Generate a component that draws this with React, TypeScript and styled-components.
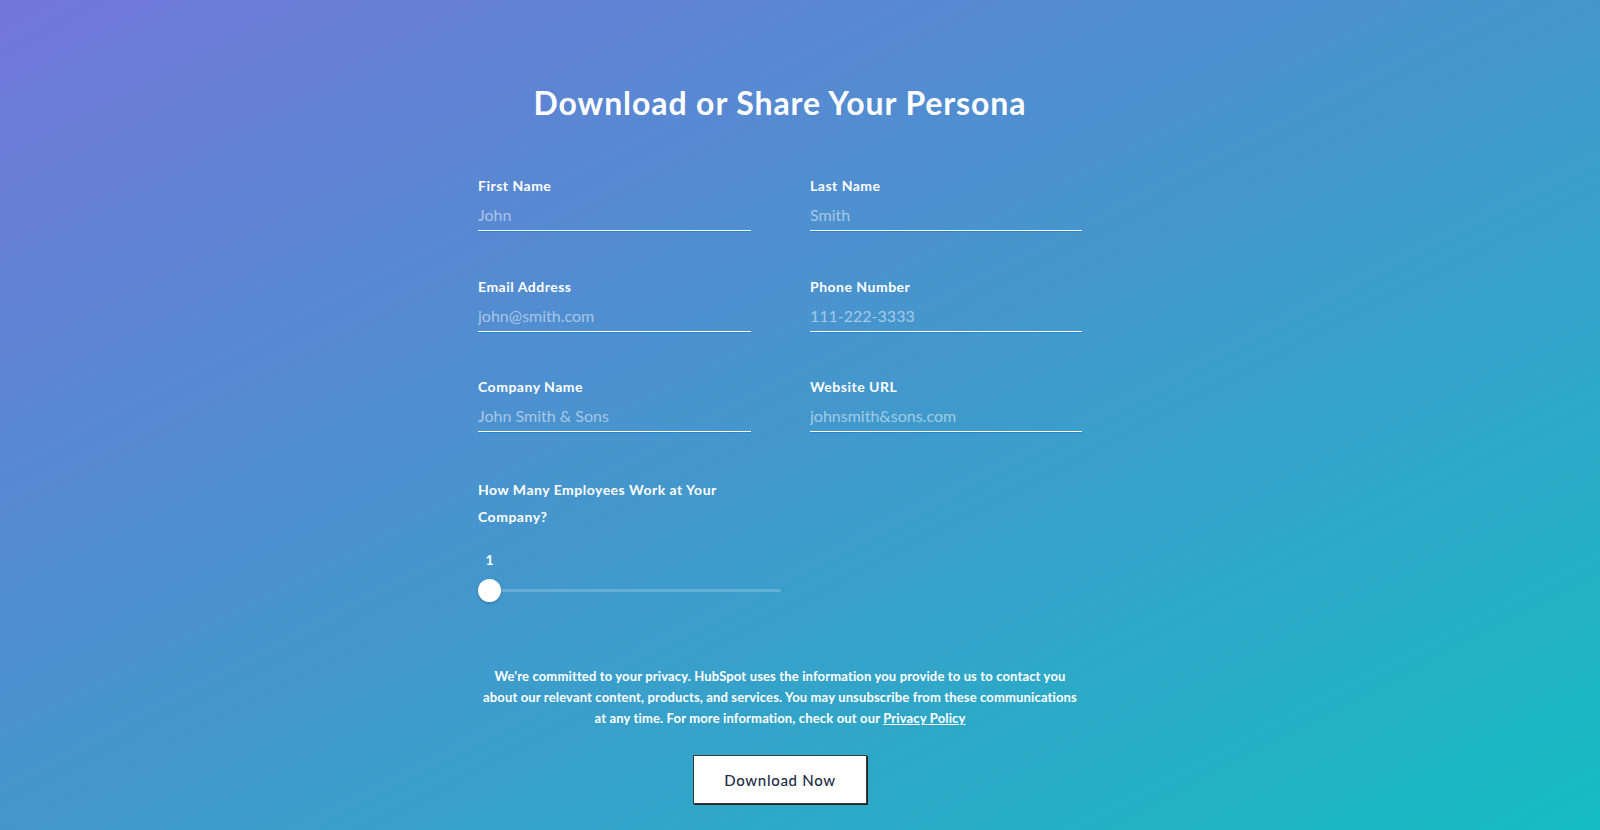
import React, { useState } from 'react';
import styled, { createGlobalStyle } from 'styled-components';

const GlobalStyle = createGlobalStyle`
  html, body {
    margin: 0;
    padding: 0;
  }
  body {
    font-family: Lato, 'Open Sans', Arial, sans-serif;
    -webkit-font-smoothing: antialiased;
  }
  * {
    box-sizing: border-box;
  }
`;

const Page = styled.div`
  min-height: 100vh;
  padding: 85px 40px 26px 0;
  background: linear-gradient(to bottom right, #7276d9 0%, #4497cd 50%, #14bcc2 100%);
  display: flex;
  justify-content: center;
`;

const Form = styled.form`
  width: 604px;
  display: flex;
  flex-direction: column;
  align-items: center;
`;

const Title = styled.h1`
  margin: 0 0 56px;
  font-size: 32px;
  line-height: 36px;
  font-weight: 700;
  letter-spacing: 0.9px;
  color: #fff;
  text-align: center;
  white-space: nowrap;
`;

const FieldGrid = styled.div`
  width: 100%;
  display: grid;
  grid-template-columns: 273px 272px;
  column-gap: 59px;
  row-gap: 46.5px;
`;

const Field = styled.label`
  display: flex;
  flex-direction: column;
`;

const Label = styled.span<{ $tall?: boolean }>`
  font-size: 14px;
  line-height: ${(p) => (p.$tall ? '27px' : '18px')};
  font-weight: 700;
  letter-spacing: 0.5px;
  color: #fff;
`;

const TextInput = styled.input`
  height: 36px;
  padding: 4px 0 0;
  border: none;
  border-bottom: 1px solid #fff;
  box-shadow: 0 1px 0 #2b86c9;
  background: transparent;
  outline: none;
  font-family: inherit;
  font-size: 16px;
  color: #fff;

  &::placeholder {
    color: rgba(255, 255, 255, 0.5);
  }
`;

const SliderBlock = styled.div`
  align-self: flex-start;
  width: 303px;
  margin-top: 44px;
  display: flex;
  flex-direction: column;
`;

const SliderLabel = styled(Label)`
  width: 273px;
`;

const SliderValue = styled.span`
  width: 23px;
  margin: 21px 0 9px;
  text-align: center;
  font-size: 14px;
  line-height: 18px;
  font-weight: 700;
  color: #fff;
`;

const Range = styled.input`
  -webkit-appearance: none;
  appearance: none;
  width: 100%;
  height: 24px;
  margin: 0;
  background: transparent;
  outline: none;

  &::-webkit-slider-runnable-track {
    height: 3px;
    background: rgba(255, 255, 255, 0.2);
    border-radius: 2px;
  }

  &::-webkit-slider-thumb {
    -webkit-appearance: none;
    width: 23px;
    height: 23px;
    margin-top: -10px;
    border-radius: 50%;
    background: #fff;
    box-shadow: 0 1px 3px rgba(0, 0, 0, 0.25);
    cursor: pointer;
  }
`;

const Privacy = styled.p`
  width: 660px;
  margin: 64px 0 26px;
  font-size: 13px;
  line-height: 21px;
  font-weight: 700;
  letter-spacing: 0.15px;
  color: #fff;
  text-align: center;
  white-space: nowrap;
`;

const PolicyLink = styled.a`
  color: #fff;
  text-decoration: underline;
`;

const SubmitButton = styled.button`
  width: 174px;
  height: 49px;
  background: #fff;
  border: 1px solid #3a3a3a;
  box-shadow: 1px 1px 0 #222;
  font-family: inherit;
  font-size: 15px;
  font-weight: 500;
  letter-spacing: 0.7px;
  color: #1d2b45;
  cursor: pointer;
`;

const fields = [
  { label: 'First Name', placeholder: 'John', type: 'text' },
  { label: 'Last Name', placeholder: 'Smith', type: 'text' },
  { label: 'Email Address', placeholder: 'john@smith.com', type: 'email' },
  { label: 'Phone Number', placeholder: '111-222-3333', type: 'tel' },
  { label: 'Company Name', placeholder: 'John Smith & Sons', type: 'text' },
  { label: 'Website URL', placeholder: 'johnsmith&sons.com', type: 'text' },
];

const App = () => {
  const [employees, setEmployees] = useState(1);

  return (
    <Page>
      <GlobalStyle />
      <Form onSubmit={(e) => e.preventDefault()}>
        <Title>Download or Share Your Persona</Title>

        <FieldGrid>
          {fields.map((f) => (
            <Field key={f.label}>
              <Label>{f.label}</Label>
              <TextInput type={f.type} placeholder={f.placeholder} />
            </Field>
          ))}
        </FieldGrid>

        <SliderBlock>
          <SliderLabel $tall>How Many Employees Work at Your Company?</SliderLabel>
          <SliderValue>{employees}</SliderValue>
          <Range
            type="range"
            min={1}
            max={10000}
            value={employees}
            onChange={(e) => setEmployees(Number(e.target.value))}
          />
        </SliderBlock>

        <Privacy>
          We're committed to your privacy. HubSpot uses the information you provide to us to contact you
          <br />
          about our relevant content, products, and services. You may unsubscribe from these communications
          <br />
          at any time. For more information, check out our <PolicyLink href="#">Privacy Policy</PolicyLink>
        </Privacy>

        <SubmitButton type="submit">Download Now</SubmitButton>
      </Form>
    </Page>
  );
};

export default App;
